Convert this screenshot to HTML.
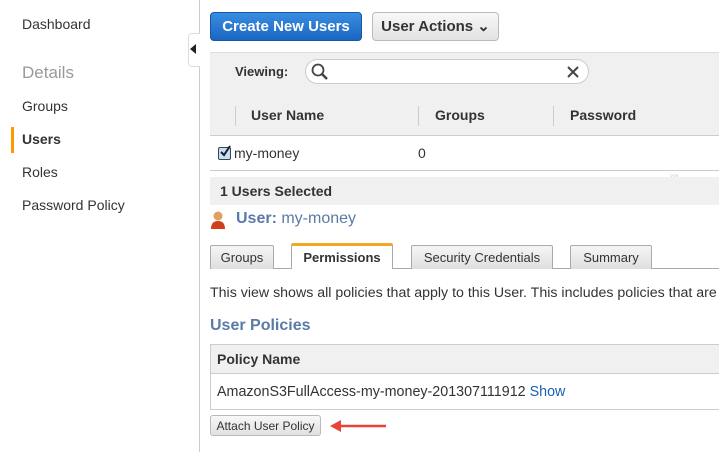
<!DOCTYPE html><html><head><style>
body{margin:0;width:719px;height:452px;overflow:hidden;background:#fff;font-family:"Liberation Sans",sans-serif;color:#333;position:relative}
div,span{position:absolute}
.nav{left:22px;font-size:14px;color:#333}
.b{font-weight:bold}
.tab{top:245px;height:23px;border:1px solid #aaa;border-bottom:none;background:linear-gradient(#f6f6f6,#dedede);font-size:13px;text-align:center;line-height:24px;border-radius:2px 2px 0 0}
</style></head><body>
<div style="left:199px;top:0;width:1px;height:452px;background:#ccc"></div>
<div class="nav" style="top:16px">Dashboard</div>
<div class="nav" style="top:63px;font-size:17px;color:#999">Details</div>
<div class="nav" style="top:98px">Groups</div>
<div style="left:11px;top:127px;width:3px;height:26px;background:#f90"></div>
<div class="nav b" style="top:131px">Users</div>
<div class="nav" style="top:164px">Roles</div>
<div class="nav" style="top:197px">Password Policy</div>
<div style="left:188px;top:33px;width:11px;height:32px;background:#fff;border:1px solid #ddd;border-right:none;border-radius:4px 0 0 4px"></div>
<div style="left:190px;top:44px;width:0;height:0;border-top:5px solid transparent;border-bottom:5px solid transparent;border-right:6px solid #222"></div>

<div style="left:210px;top:12px;width:152px;height:29px;border-radius:4px;background:linear-gradient(#3a8de0,#1a66c2);border:1px solid #1457a8;box-sizing:border-box;color:#fff;font-weight:bold;font-size:15px;text-align:center;line-height:28px">Create New Users</div>
<div style="left:372px;top:12px;width:127px;height:29px;border-radius:4px;background:linear-gradient(#f8f8f8,#e2e2e2);border:1px solid #bbb;box-sizing:border-box;color:#333;font-weight:bold;font-size:15px;text-align:center;line-height:28px">User Actions ⌄</div>

<div style="left:210px;top:52px;width:509px;height:42px;background:#f0f0f0;border-top:1px solid #ddd;border-bottom:1px solid #ddd"></div>
<div class="b" style="left:235px;top:64px;font-size:13px">Viewing:</div>
<div style="left:305px;top:59px;width:284px;height:25px;border:1px solid #ccc;border-radius:13px;background:#fff;box-sizing:border-box"></div>
<svg style="position:absolute;left:310px;top:62px" width="20" height="20"><circle cx="8" cy="8" r="5.5" fill="none" stroke="#444" stroke-width="1.8"/><line x1="12" y1="12" x2="17" y2="17" stroke="#444" stroke-width="2.5"/></svg>
<svg style="position:absolute;left:566px;top:65px" width="14" height="14"><path d="M2 2L12 12M12 2L2 12" stroke="#444" stroke-width="2"/></svg>

<div style="left:210px;top:95px;width:509px;height:40px;background:#f0f0f0;border-bottom:1px solid #ccc"></div>
<div style="left:235px;top:106px;width:1px;height:20px;background:#ccc"></div>
<div style="left:418px;top:106px;width:1px;height:20px;background:#ccc"></div>
<div style="left:553px;top:106px;width:1px;height:20px;background:#ccc"></div>
<div class="b" style="left:251px;top:107px;font-size:14px">User Name</div>
<div class="b" style="left:435px;top:107px;font-size:14px">Groups</div>
<div class="b" style="left:570px;top:107px;font-size:14px">Password</div>
<div style="left:218px;top:147px;width:11px;height:11px;border:1px solid #345;border-radius:2px;background:#cde"></div>
<svg style="position:absolute;left:218px;top:144px" width="14" height="14"><path d="M3 8L6 11L12 2" fill="none" stroke="#123" stroke-width="2"/></svg>
<div style="left:234px;top:145px;font-size:14px">my-money</div>
<div style="left:418px;top:145px;font-size:14px">0</div>
<div style="left:210px;top:170px;width:509px;height:1px;background:#ccc"></div>
<div style="left:670px;top:171px;font-size:8px;color:#aaa">◦◦◦</div>
<div style="left:210px;top:177px;width:509px;height:28px;background:#f0f0f0"></div>
<div class="b" style="left:220px;top:183px;font-size:14px">1 Users Selected</div>
<svg style="position:absolute;left:210px;top:210px" width="16" height="20"><circle cx="8" cy="6" r="4.5" fill="#e0a060"/><path d="M1 19Q1 11 8 11Q15 11 15 19Z" fill="#d0401a"/></svg>
<div style="left:236px;top:210px;font-size:16px;color:#5a7aa8"><b>User:</b> my-money</div>

<div style="left:210px;top:268px;width:509px;height:1px;background:#aaa"></div>
<div class="tab" style="left:210px;width:62px">Groups</div>
<div class="tab b" style="left:291px;top:243px;width:102px;height:26px;background:#fff;border-top:3px solid #f5a623;box-sizing:border-box;line-height:24px">Permissions</div>
<div class="tab" style="left:411px;width:140px">Security Credentials</div>
<div class="tab" style="left:570px;width:80px">Summary</div>

<div style="left:210px;top:285px;font-size:14.2px;white-space:nowrap">This view shows all policies that apply to this User. This includes policies that are</div>
<div class="b" style="left:210px;top:317px;font-size:16px;color:#5a7aa8">User Policies</div>
<div style="left:210px;top:344px;width:520px;height:66px;border:1px solid #ccc;box-sizing:border-box"></div>
<div style="left:211px;top:345px;width:508px;height:28px;background:#f0f0f0;border-bottom:1px solid #ccc"></div>
<div class="b" style="left:217px;top:351px;font-size:14px">Policy Name</div>
<div style="left:217px;top:384px;font-size:14.3px;white-space:nowrap">AmazonS3FullAccess-my-money-201307111912 <span style="position:static;color:#1a5fb4">Show</span></div>
<div style="left:210px;top:415px;width:111px;height:21px;border:1px solid #bbb;border-radius:3px;background:linear-gradient(#f8f8f8,#e0e0e0);box-sizing:border-box;font-size:12px;text-align:center;line-height:20px">Attach User Policy</div>
<svg style="position:absolute;left:328px;top:418px" width="60" height="16"><path d="M58 8H10" stroke="#e8443a" stroke-width="2.5"/><path d="M2 8L13 2L13 14Z" fill="#e8443a"/></svg>
</body></html>
